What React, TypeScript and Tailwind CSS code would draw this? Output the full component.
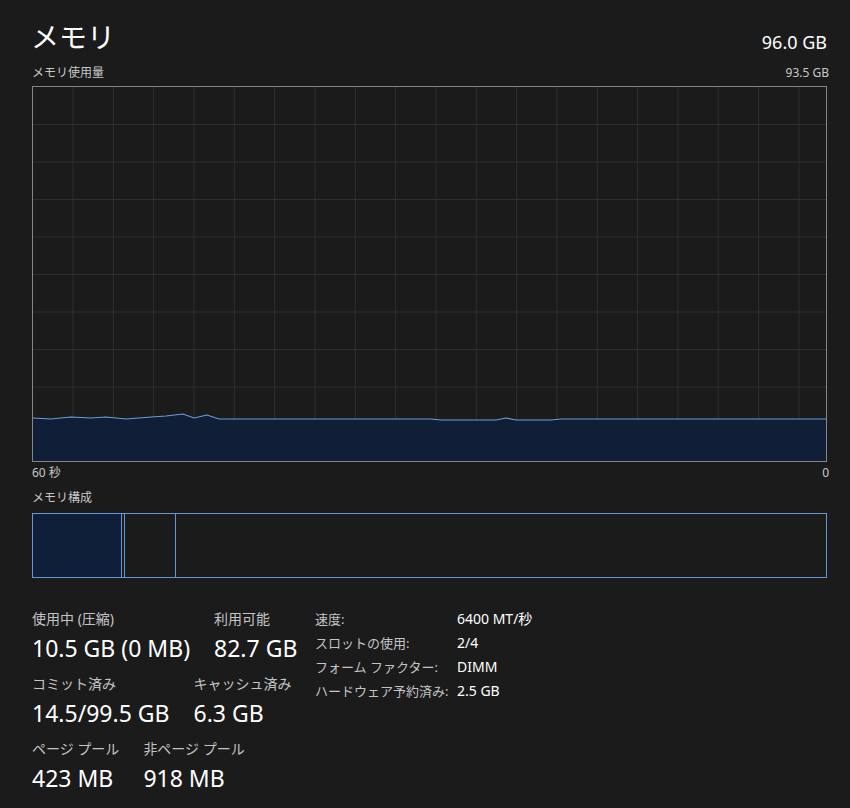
import React from 'react';

const W = 793;
const H = 374;

// sample points in graph-local pixels (x from left border, y from top border)
const pts: [number, number][] = [
  [0, 331], [18, 332], [38, 330], [58, 331], [73, 330], [93, 332], [118, 330],
  [133, 329], [150, 327], [161, 331], [174, 328], [186, 332], [398, 332],
  [408, 333], [463, 333], [473, 331], [483, 333], [518, 333], [528, 332], [W, 332],
];

function UsageGraph() {
  const line = pts.map(([x, y], i) => `${i ? 'L' : 'M'}${x} ${y}`).join(' ');
  const area = `${line} L${W} ${H} L0 ${H} Z`;
  const vLines = Array.from({ length: 19 }, (_, i) => 40 + i * 40.33);
  const hLines = Array.from({ length: 9 }, (_, i) => 37.5 * (i + 1));
  return (
    <div className="border border-[#858585] h-[376px] w-full">
      <svg width="100%" height="100%" viewBox={`0 0 ${W} ${H}`} preserveAspectRatio="none" className="block">
        {vLines.map((x) => (
          <line key={`v${x}`} x1={x} x2={x} y1={0} y2={H} stroke="#2f2f2f" strokeWidth={1} />
        ))}
        {hLines.map((y) => (
          <line key={`h${y}`} x1={0} x2={W} y1={y} y2={y} stroke="#2f2f2f" strokeWidth={1} />
        ))}
        <path d={area} fill="#0f1e39" fillOpacity={0.93} />
        <path d={line} fill="none" stroke="#6e9dd6" strokeWidth={1.2} />
      </svg>
    </div>
  );
}

function Stat({ label, value }: { label: string; value: string }) {
  return (
    <div className="flex flex-col">
      <div className="text-[14px] leading-[20px] text-[#c4c4c4] whitespace-nowrap">{label}</div>
      <div className="text-[23px] leading-[30px] text-white mt-[4px] whitespace-nowrap">{value}</div>
    </div>
  );
}

export default function App() {
  const specs = [
    ['速度:', '6400 MT/秒'],
    ['スロットの使用:', '2/4'],
    ['フォーム ファクター:', 'DIMM'],
    ['ハードウェア予約済み:', '2.5 GB'],
  ];

  return (
    <div className="min-h-screen bg-[#1b1b1b] text-white font-['Noto_Sans','Noto_Sans_CJK_JP',sans-serif] pl-[32px] pr-[23px] pt-[19px]">
      <div className="flex items-end justify-between">
        <h1 className="text-[28px] leading-[36px] font-normal -ml-[1px]">メモリ</h1>
        <div className="text-[18px] leading-[24px] mb-[1px]">96.0 GB</div>
      </div>

      <div className="flex justify-between text-[12px] leading-[16px] text-[#c8c8c8] mt-[10px] mb-[5px]">
        <span>メモリ使用量</span>
        <span className="mr-[-2px]">93.5 GB</span>
      </div>

      <UsageGraph />

      <div className="flex justify-between text-[12px] leading-[16px] text-[#c8c8c8] mt-[3px]">
        <span>60 秒</span>
        <span className="mr-[-2px]">0</span>
      </div>

      <div className="text-[12px] leading-[16px] text-[#c8c8c8] mt-[9px]">メモリ構成</div>

      <div className="mt-[7px] h-[65px] border border-[#6596d8] flex">
        <div className="w-[89px] bg-[#0f1e39] border-r border-[#6596d8]" />
        <div className="w-[3px] border-r border-[#6596d8]" />
        <div className="w-[51px] border-r border-[#6596d8]" />
        <div className="flex-1" />
      </div>

      <div className="flex items-start mt-[31px]">
        <div className="w-[283px] flex flex-col">
          <div className="flex gap-[24px]">
            <Stat label="使用中 (圧縮)" value="10.5 GB (0 MB)" />
            <Stat label="利用可能" value="82.7 GB" />
          </div>
          <div className="flex gap-[24px] mt-[11px]">
            <Stat label="コミット済み" value="14.5/99.5 GB" />
            <Stat label="キャッシュ済み" value="6.3 GB" />
          </div>
          <div className="flex gap-[24px] mt-[11px]">
            <Stat label="ページ プール" value="423 MB" />
            <Stat label="非ページ プール" value="918 MB" />
          </div>
        </div>
        <div className="grid grid-cols-[142px_auto] content-start -mt-[2px] leading-[24px]">
          {specs.map(([k, v]) => (
            <React.Fragment key={k}>
              <div className="text-[13px] text-[#c4c4c4] whitespace-nowrap">{k}</div>
              <div className="text-[14px] text-white whitespace-nowrap">{v}</div>
            </React.Fragment>
          ))}
        </div>
      </div>
    </div>
  );
}
